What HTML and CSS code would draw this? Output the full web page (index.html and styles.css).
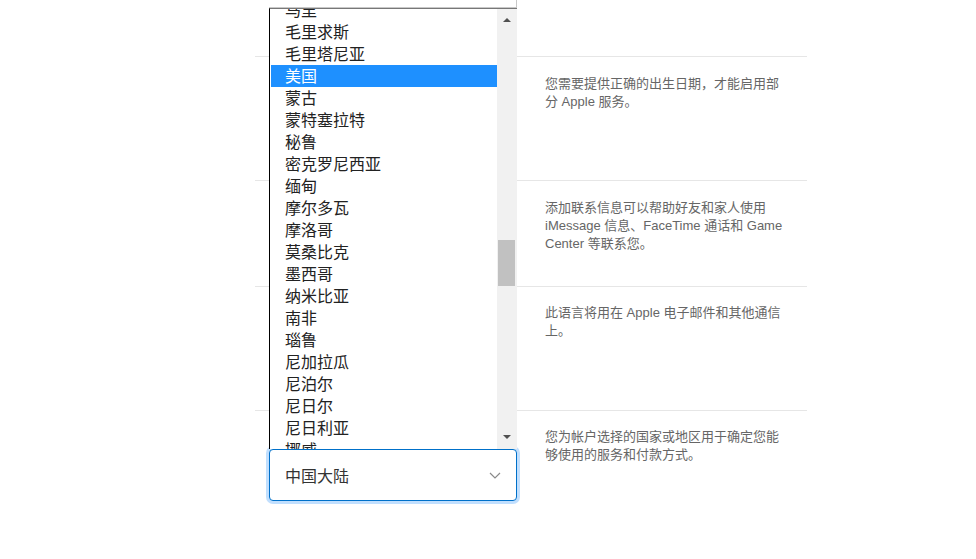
FILE: index.html
```html
<!DOCTYPE html>
<html lang="zh-CN">
<head>
<meta charset="utf-8">
<title>国家或地区</title>
<link rel="stylesheet" href="styles.css">
</head>
<body>
<div class="page">
  <div class="row row-top">
    <div class="field"><div class="input-stub"></div></div>
  </div>
  <div class="row row-birth">
    <div class="field"></div>
    <p class="desc">您需要提供正确的出生日期，才能启用部分 Apple 服务。</p>
  </div>
  <div class="row row-contact">
    <div class="field"></div>
    <p class="desc">添加联系信息可以帮助好友和家人使用 iMessage 信息、FaceTime 通话和 Game Center 等联系您。</p>
  </div>
  <div class="row row-lang">
    <div class="field"></div>
    <p class="desc desc-tight">此语言将用在 Apple 电子邮件和其他通信上。</p>
  </div>
  <div class="row row-country">
    <div class="field">
      <div class="select-wrap">
        <div class="popup">
          <ul class="options">
            <li>马里</li>
            <li>毛里求斯</li>
            <li>毛里塔尼亚</li>
            <li class="active">美国</li>
            <li>蒙古</li>
            <li>蒙特塞拉特</li>
            <li>秘鲁</li>
            <li>密克罗尼西亚</li>
            <li>缅甸</li>
            <li>摩尔多瓦</li>
            <li>摩洛哥</li>
            <li>莫桑比克</li>
            <li>墨西哥</li>
            <li>纳米比亚</li>
            <li>南非</li>
            <li>瑙鲁</li>
            <li>尼加拉瓜</li>
            <li>尼泊尔</li>
            <li>尼日尔</li>
            <li>尼日利亚</li>
            <li>挪威</li>
          </ul>
          <div class="scrollbar">
            <span class="arrow arrow-up"></span>
            <span class="thumb"></span>
            <span class="arrow arrow-down"></span>
          </div>
        </div>
        <div class="select">
          <span class="select-value">中国大陆</span>
          <svg class="chevron" width="12" height="7" viewBox="0 0 12 7"><path d="M1 1 L6 6 L11 1" fill="none" stroke="#8a8a8a" stroke-width="1.2"/></svg>
        </div>
      </div>
    </div>
    <p class="desc desc-tight">您为帐户选择的国家或地区用于确定您能够使用的服务和付款方式。</p>
  </div>
</div>
</body>
</html>
```

FILE: styles.css
```css
html, body {
  margin: 0;
  padding: 0;
  background: #fff;
}

body {
  font-family: "Liberation Sans", "Noto Sans CJK SC", sans-serif;
  overflow: hidden;
}

.page {
  width: 552px;
  margin-left: 255px;
}

.row {
  display: flex;
  gap: 28px;
  padding-left: 14px;
  box-sizing: border-box;
  border-top: 1px solid #e6e6e6;
}

.row-top {
  height: 56px;
  border-top: none;
}

.row-birth { height: 124px; }
.row-contact { height: 106px; }
.row-lang { height: 124px; }
.row-country { height: 149px; }

.field {
  width: 248px;
  flex: none;
}

.input-stub {
  height: 8px;
  box-sizing: border-box;
  border-right: 1px solid #c8c8c8;
  border-bottom: 1px solid #c8c8c8;
}

.desc {
  width: 245px;
  margin: 18px 0 0;
  font-size: 13px;
  line-height: 18px;
  color: #666;
}

.desc-tight {
  margin-top: 17px;
}

.select-wrap {
  position: relative;
  margin-top: 38px;
}

.select {
  height: 52px;
  box-sizing: border-box;
  border: 1px solid #0070c9;
  border-radius: 4px;
  box-shadow: 0 0 0 3px rgba(131, 192, 253, 0.5);
  display: flex;
  align-items: center;
  justify-content: space-between;
  padding: 0 15px 0 15px;
  background: #fff;
}

.select-value {
  font-family: "Noto Sans CJK SC", sans-serif;
  font-size: 16px;
  color: #333;
}

.chevron {
  display: block;
}

.popup {
  position: absolute;
  left: 0;
  bottom: 100%;
  width: 248px;
  height: 441px;
  box-sizing: border-box;
  border-top: 1px solid #777;
  border-left: 1px solid #000;
  background: #fff;
  display: flex;
  overflow: hidden;
  z-index: 2;
}

.options {
  list-style: none;
  margin: -10px 0 0;
  padding: 0;
  flex: 1;
  font-family: "Noto Sans CJK SC", sans-serif;
  font-size: 16px;
  color: #222;
}

.options li {
  height: 22px;
  line-height: 21px;
  padding-left: 14px;
  margin-left: 1px;
  white-space: nowrap;
}

.options li.active {
  background: #1e90ff;
  color: #fff;
}

.scrollbar {
  position: relative;
  width: 20px;
  flex: none;
  background: #f1f1f1;
}

.arrow {
  position: absolute;
  left: 6px;
  width: 0;
  height: 0;
  border-left: 4px solid transparent;
  border-right: 4px solid transparent;
}

.arrow-up {
  top: 9px;
  border-bottom: 4px solid #505050;
}

.arrow-down {
  bottom: 10px;
  border-top: 4px solid #505050;
}

.thumb {
  position: absolute;
  left: 1px;
  right: 2px;
  top: 231px;
  height: 46px;
  background: #c1c1c1;
}
```
